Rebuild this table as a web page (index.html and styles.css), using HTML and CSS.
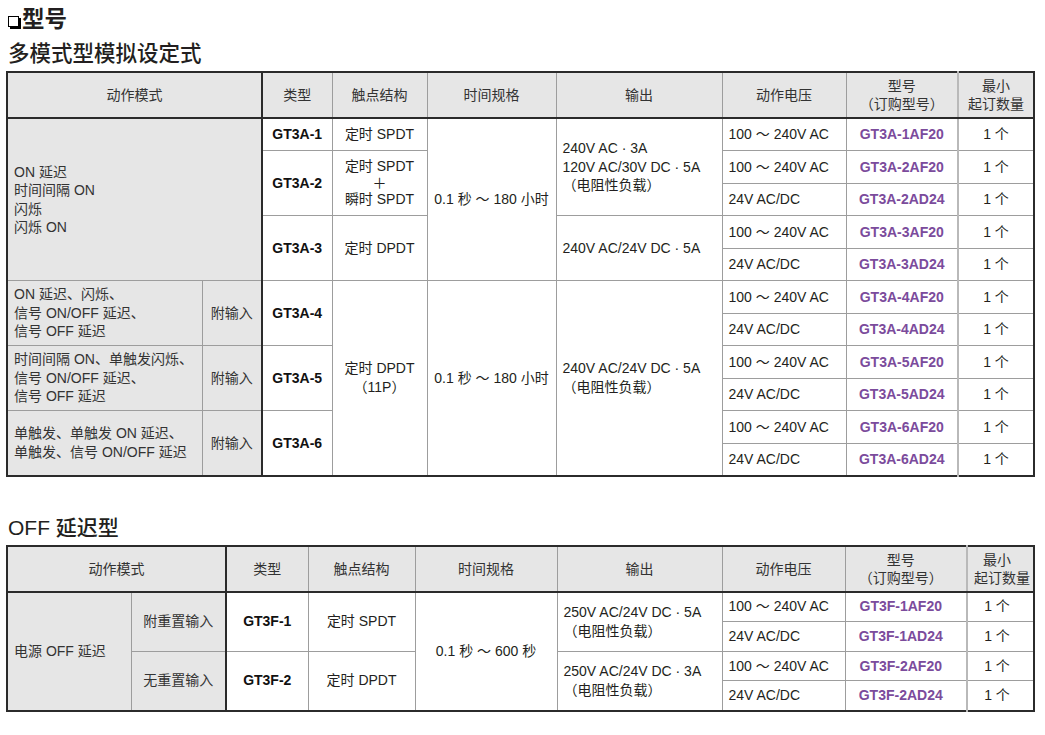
FILE: index.html
```html
<!DOCTYPE html>
<html lang="zh-CN">
<head>
<meta charset="utf-8">
<title>型号</title>
<link rel="stylesheet" href="styles.css">
</head>
<body>
<h1 class="title"><span class="box"></span>型号</h1>
<h2 class="subtitle">多模式型模拟设定式</h2>
<table class="spec t1">
  <colgroup>
    <col class="w195"><col class="w60"><col class="w70"><col class="w95"><col class="w129"><col class="w166"><col class="w124"><col class="w112"><col class="w76">
  </colgroup>
  <thead>
    <tr>
      <th colspan="2" class="mode-end">动作模式</th>
      <th>类型</th>
      <th>触点结构</th>
      <th>时间规格</th>
      <th>输出</th>
      <th>动作电压</th>
      <th class="mcol">型号<br>（订购型号）</th>
      <th class="qty">最小<br>起订数量</th>
    </tr>
  </thead>
  <tbody>
    <tr>
      <td colspan="2" rowspan="5" class="mode mode-end lines4">ON 延迟<br>时间间隔 ON<br>闪烁<br>闪烁 ON</td>
      <td class="type">GT3A-1</td>
      <td class="c">定时 SPDT</td>
      <td rowspan="5" class="c">0.1 秒 ～ 180 小时</td>
      <td rowspan="3" class="l">240V AC · 3A<br>120V AC/30V DC · 5A<br>（电阻性负载）</td>
      <td class="l">100 ～ 240V AC</td>
      <td class="model">GT3A-1AF20</td>
      <td class="qty">1 个</td>
    </tr>
    <tr>
      <td rowspan="2" class="type">GT3A-2</td>
      <td rowspan="2" class="c plus">定时 SPDT<br>＋<br>瞬时 SPDT</td>
      <td class="l">100 ～ 240V AC</td>
      <td class="model">GT3A-2AF20</td>
      <td class="qty">1 个</td>
    </tr>
    <tr>
      <td class="l">24V AC/DC</td>
      <td class="model">GT3A-2AD24</td>
      <td class="qty">1 个</td>
    </tr>
    <tr>
      <td rowspan="2" class="type">GT3A-3</td>
      <td rowspan="2" class="c">定时 DPDT</td>
      <td rowspan="2" class="l">240V AC/24V DC · 5A</td>
      <td class="l">100 ～ 240V AC</td>
      <td class="model">GT3A-3AF20</td>
      <td class="qty">1 个</td>
    </tr>
    <tr>
      <td class="l">24V AC/DC</td>
      <td class="model">GT3A-3AD24</td>
      <td class="qty">1 个</td>
    </tr>
    <tr>
      <td rowspan="2" class="mode">ON 延迟、闪烁、<br>信号 ON/OFF 延迟、<br>信号 OFF 延迟</td>
      <td rowspan="2" class="mode c mode-end">附输入</td>
      <td rowspan="2" class="type">GT3A-4</td>
      <td rowspan="6" class="c">定时 DPDT<br>（11P）</td>
      <td rowspan="6" class="c">0.1 秒 ～ 180 小时</td>
      <td rowspan="6" class="l">240V AC/24V DC · 5A<br>（电阻性负载）</td>
      <td class="l">100 ～ 240V AC</td>
      <td class="model">GT3A-4AF20</td>
      <td class="qty">1 个</td>
    </tr>
    <tr>
      <td class="l">24V AC/DC</td>
      <td class="model">GT3A-4AD24</td>
      <td class="qty">1 个</td>
    </tr>
    <tr>
      <td rowspan="2" class="mode">时间间隔 ON、单触发闪烁、<br>信号 ON/OFF 延迟、<br>信号 OFF 延迟</td>
      <td rowspan="2" class="mode c mode-end">附输入</td>
      <td rowspan="2" class="type">GT3A-5</td>
      <td class="l">100 ～ 240V AC</td>
      <td class="model">GT3A-5AF20</td>
      <td class="qty">1 个</td>
    </tr>
    <tr>
      <td class="l">24V AC/DC</td>
      <td class="model">GT3A-5AD24</td>
      <td class="qty">1 个</td>
    </tr>
    <tr>
      <td rowspan="2" class="mode">单触发、单触发 ON 延迟、<br>单触发、信号 ON/OFF 延迟</td>
      <td rowspan="2" class="mode c mode-end">附输入</td>
      <td rowspan="2" class="type">GT3A-6</td>
      <td class="l">100 ～ 240V AC</td>
      <td class="model">GT3A-6AF20</td>
      <td class="qty">1 个</td>
    </tr>
    <tr>
      <td class="l">24V AC/DC</td>
      <td class="model">GT3A-6AD24</td>
      <td class="qty">1 个</td>
    </tr>
  </tbody>
</table>

<h2 class="subtitle second">OFF 延迟型</h2>
<table class="spec t2">
  <colgroup>
    <col class="w124"><col class="w95"><col class="w82"><col class="w107"><col class="w142"><col class="w165"><col class="w123"><col class="w122"><col class="w67">
  </colgroup>
  <thead>
    <tr>
      <th colspan="2" class="mode-end">动作模式</th>
      <th>类型</th>
      <th>触点结构</th>
      <th>时间规格</th>
      <th>输出</th>
      <th>动作电压</th>
      <th class="mcol">型号<br>（订购型号）</th>
      <th class="qty">最小<br>起订数量</th>
    </tr>
  </thead>
  <tbody>
    <tr>
      <td rowspan="4" class="mode">电源 OFF 延迟</td>
      <td rowspan="2" class="mode c mode-end">附重置输入</td>
      <td rowspan="2" class="type">GT3F-1</td>
      <td rowspan="2" class="c">定时 SPDT</td>
      <td rowspan="4" class="c">0.1 秒 ～ 600 秒</td>
      <td rowspan="2" class="l out">250V AC/24V DC · 5A<br>（电阻性负载）</td>
      <td class="l">100 ～ 240V AC</td>
      <td class="model">GT3F-1AF20</td>
      <td class="qty">1 个</td>
    </tr>
    <tr>
      <td class="l">24V AC/DC</td>
      <td class="model">GT3F-1AD24</td>
      <td class="qty">1 个</td>
    </tr>
    <tr>
      <td rowspan="2" class="mode c mode-end">无重置输入</td>
      <td rowspan="2" class="type">GT3F-2</td>
      <td rowspan="2" class="c">定时 DPDT</td>
      <td rowspan="2" class="l out">250V AC/24V DC · 3A<br>（电阻性负载）</td>
      <td class="l">100 ～ 240V AC</td>
      <td class="model">GT3F-2AF20</td>
      <td class="qty">1 个</td>
    </tr>
    <tr>
      <td class="l">24V AC/DC</td>
      <td class="model">GT3F-2AD24</td>
      <td class="qty">1 个</td>
    </tr>
  </tbody>
</table>
</body>
</html>
```

FILE: styles.css
```css
* { box-sizing: border-box; }

body {
  margin: 0;
  padding: 6px 10px 0 6px;
  background: #ffffff;
  color: #231f20;
  font-family: "Liberation Sans", "Noto Sans CJK SC", sans-serif;
}

.title {
  display: flex;
  align-items: center;
  margin: 0 0 0 2px;
  height: 28px;
  font-size: 22.5px;
  line-height: 28px;
  font-weight: bold;
  font-family: "Liberation Sans", "Noto Sans CJK SC", sans-serif;
}

.title .box {
  display: inline-block;
  width: 11px;
  height: 11px;
  border: 1.5px solid #000000;
  box-shadow: 2px 2px 0 #000000;
  margin: 2px 3px 0 0;
}

.subtitle {
  margin: 5px 0 2px 2px;
  font-size: 21.5px;
  line-height: 30px;
  font-weight: 500;
  font-family: "Liberation Sans", "Noto Sans CJK SC", sans-serif;
}

.subtitle.second {
  margin-top: 36px;
  font-size: 21px;
}

.spec {
  border-collapse: collapse;
  table-layout: fixed;
  width: 1029px;
  border: 2px solid #2b2b2b;
  font-size: 14px;
}

.w195 { width: 195px; }
.w60 { width: 60px; }
.w70 { width: 70px; }
.w95 { width: 95px; }
.w129 { width: 129px; }
.w166 { width: 166px; }
.w124 { width: 124px; }
.w112 { width: 112px; }
.w76 { width: 76px; }
.w82 { width: 82px; }
.w107 { width: 107px; }
.w142 { width: 142px; }
.w165 { width: 165px; }
.w123 { width: 123px; }
.w122 { width: 122px; }
.w67 { width: 67px; }

.spec th,
.spec td {
  border: 1px solid #9d9d9d;
  padding: 0 6px;
  vertical-align: middle;
  line-height: 18.5px;
  white-space: nowrap;
}

.spec th {
  background: #e6e6e6;
  color: #333333;
  font-weight: normal;
  text-align: center;
  border-bottom: 2px solid #2b2b2b;
  line-height: 18px;
}

.t1 thead tr,
.t2 thead tr { height: 46px; }

.t1 tbody tr { height: 32.5px; }
.t2 tbody tr { height: 29.75px; }

.spec .mode-end { border-right: 2px solid #2b2b2b; }

.spec .qty { border-left: 2px solid #b9b9b9; text-align: center; }

.mode {
  background: #e6e6e6;
  text-align: left;
  color: #333333;
}

.lines4 { line-height: 19px; }

.c { text-align: center; }
.l { text-align: left; }
.out { padding-left: 8px; }

.type {
  text-align: center;
  font-weight: bold;
  color: #111111;
}

.model {
  text-align: center;
  font-weight: bold;
  color: #7b4b9c;
}

.spec td.plus { line-height: 16.5px; }

.t2 .model,
.t2 .mcol { padding-right: 16px; }

.t2 .qty { padding-right: 13px; }
```
